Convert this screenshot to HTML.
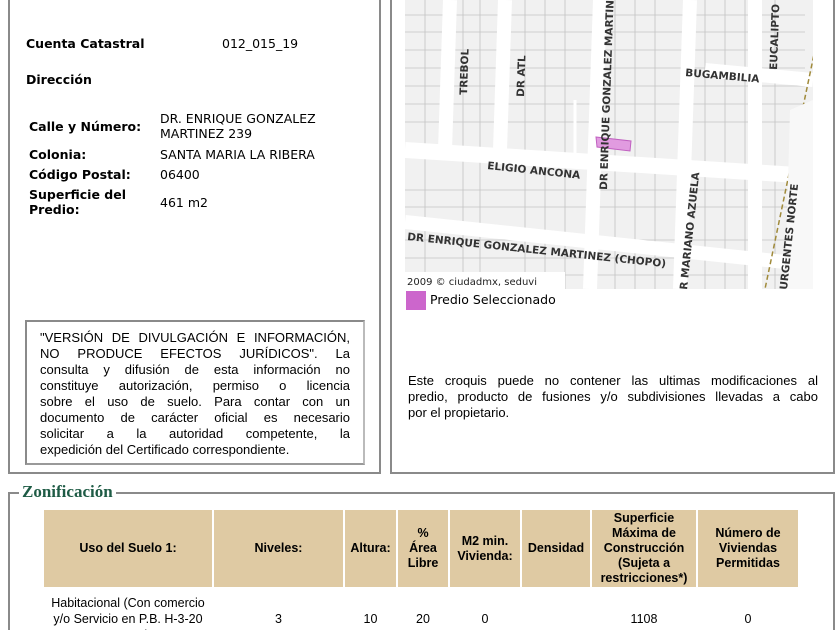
<!DOCTYPE html>
<html><head><meta charset="utf-8"><style>
*{margin:0;padding:0;box-sizing:border-box}
html,body{width:840px;height:630px;overflow:hidden}
body{background:#fff;position:relative;font-family:"DejaVu Sans","Liberation Sans",sans-serif;color:#000}
.a{position:absolute}
.box{position:absolute;border:2px solid #8a8a8a;border-top:none}
.lb{font-weight:bold;font-size:12.5px}
.v{font-size:12.5px}
.n{font-family:"Liberation Sans Narrow","Liberation Sans",sans-serif;font-size:13px}
.j{text-align:justify;text-align-last:justify;white-space:nowrap;height:16px;line-height:16px}
table{border-collapse:separate;border-spacing:2px;position:absolute;left:42px;top:508px;font-family:"Liberation Sans Narrow","Liberation Sans",sans-serif;font-size:12.5px}
th{background:#dfcaa3;font-weight:bold;text-align:center;height:77px;padding:0 2px;line-height:15px}
td{text-align:center;height:60px;line-height:16px}
</style></head><body>
<div class="box" style="left:8px;top:-2px;width:373px;height:476px"></div>
<div class="box" style="left:390px;top:-2px;width:445px;height:476px"></div>

<div class="a lb" style="left:26px;top:36px">Cuenta Catastral</div>
<div class="a v" style="left:222px;top:36px">012_015_19</div>
<div class="a lb" style="left:26px;top:72px">Dirección</div>
<div class="a lb" style="left:29px;top:119px">Calle y Número:</div>
<div class="a v" style="left:160px;top:111px;line-height:15px">DR. ENRIQUE GONZALEZ<br>MARTINEZ 239</div>
<div class="a lb" style="left:29px;top:147px">Colonia:</div>
<div class="a v" style="left:160px;top:147px">SANTA MARIA LA RIBERA</div>
<div class="a lb" style="left:29px;top:167px">Código Postal:</div>
<div class="a v" style="left:160px;top:167px">06400</div>
<div class="a lb" style="left:29px;top:187px;line-height:15px">Superficie del<br>Predio:</div>
<div class="a v" style="left:160px;top:195px">461 m2</div>

<div class="a" style="left:25px;top:320px;width:340px;height:145px;border:2px solid #8a8a8a;border-right-color:#bbb;border-bottom-color:#999"></div>
<div class="a n" style="left:40px;top:330px;width:310px">
<div class="j">"VERSIÓN DE DIVULGACIÓN E INFORMACIÓN,</div>
<div class="j">NO PRODUCE EFECTOS JURÍDICOS". La</div>
<div class="j">consulta y difusión de esta información no</div>
<div class="j">constituye autorización, permiso o licencia</div>
<div class="j">sobre el uso de suelo. Para contar con un</div>
<div class="j">documento de carácter oficial es necesario</div>
<div class="j">solicitar a la autoridad competente, la</div>
<div style="height:16px;line-height:16px;white-space:nowrap">expedición del Certificado correspondiente.</div>
</div>

<svg class="a" style="left:405px;top:0" width="408" height="289" viewBox="0 0 408 289">
<rect width="408" height="289" fill="#f1f1f1"/>
<g stroke="#c2c2c2" stroke-width="0.8" fill="none">
<path d="M0 15H400M0 32H400M0 50H400M0 68H400M0 86H400M0 104H400M0 122H400M0 190H400M0 207H400M0 240H400M0 258H400M0 275H400"/>
<path d="M20 0V289M58 0V289M75 0V289M120 0V289M140 0V289M160 0V289M210 0V289M230 0V289M250 0V289M300 0V289M320 0V289M340 0V289M370 0V289"/>
</g>
<g stroke="#fff" fill="none">
<path d="M0 150 L408 176" stroke-width="16"/>
<path d="M0 222 L380 262" stroke-width="14"/>
<path d="M45 0 L40 150" stroke-width="14"/>
<path d="M100 0 L95 150" stroke-width="14"/>
<path d="M195 0 L185 289" stroke-width="14"/>
<path d="M285 0 L275 289" stroke-width="14"/>
<path d="M300 70 L408 80" stroke-width="14"/>
<path d="M350 0 L350 289" stroke-width="14"/>
<path d="M170 100 L170 160" stroke-width="3"/>
</g>
<path d="M412 40 L360 289" stroke="#a08a3a" stroke-width="1.5" stroke-dasharray="5 3" fill="none"/>
<path d="M385 110 L408 100 L408 289 L380 289Z" fill="#f8f8f8"/>
<path d="M191 137 L226 141 L225 151 L192 147Z" fill="#e19be0" stroke="#c060c0"/>
<g font-family="DejaVu Sans" font-weight="bold" font-size="10.5" fill="#333">
<text transform="translate(62 95) rotate(-88)">TREBOL</text>
<text transform="translate(119 97) rotate(-88)">DR ATL</text>
<text transform="translate(202 190) rotate(-88)">DR ENRIQUE GONZALEZ MARTIN</text>
<text transform="translate(280 76) rotate(5)">BUGAMBILIA</text>
<text transform="translate(372 70) rotate(-88)">EUCALIPTO</text>
<text transform="translate(82 169) rotate(6)">ELIGIO ANCONA</text>
<text transform="translate(2 240) rotate(6)">DR ENRIQUE GONZALEZ MARTINEZ (CHOPO)</text>
<text transform="translate(282 290) rotate(-84)">R MARIANO AZUELA</text>
<text transform="translate(382 290) rotate(-84)">URGENTES NORTE</text>
</g>
<rect x="0" y="272" width="160" height="17" fill="#fff"/>
<text x="2" y="285" font-family="DejaVu Sans" font-size="10" fill="#222">2009 © ciudadmx, seduvi</text>
</svg>
<div class="a" style="left:406px;top:291px;width:20px;height:19px;background:#cc66cc"></div>
<div class="a" style="left:430px;top:292px;font-size:12.5px">Predio Seleccionado</div>

<div class="a n" style="left:408px;top:373px;width:410px">
<div class="j">Este croquis puede no contener las ultimas modificaciones al</div>
<div class="j">predio, producto de fusiones y/o subdivisiones llevadas a cabo</div>
<div style="height:16px;line-height:16px">por el propietario.</div>
</div>

<div class="a" style="left:8px;top:492px;width:827px;height:160px;border:2px solid #8a8a8a"></div>
<div class="a" style="left:19px;top:482px;background:#fff;padding:0 3px 0 3px;font-family:'Liberation Serif',serif;font-weight:bold;font-size:17px;color:#1e5b45">Zonificación</div>

<table>
<tr><th style="width:168px">Uso del Suelo 1:</th><th style="width:129px">Niveles:</th><th style="width:51px">Altura:</th><th style="width:50px">%<br>Área<br>Libre</th><th style="width:70px">M2 min.<br>Vivienda:</th><th style="width:68px">Densidad</th><th style="width:104px">Superficie<br>Máxima de<br>Construcción<br>(Sujeta a<br>restricciones*)</th><th style="width:100px">Número de<br>Viviendas<br>Permitidas</th></tr>
<tr><td>Habitacional (Con comercio<br>y/o Servicio en P.B. H-3-20<br>o 10 m)</td><td>3</td><td>10</td><td>20</td><td>0</td><td></td><td>1108</td><td>0</td></tr>
</table>
</body></html>
